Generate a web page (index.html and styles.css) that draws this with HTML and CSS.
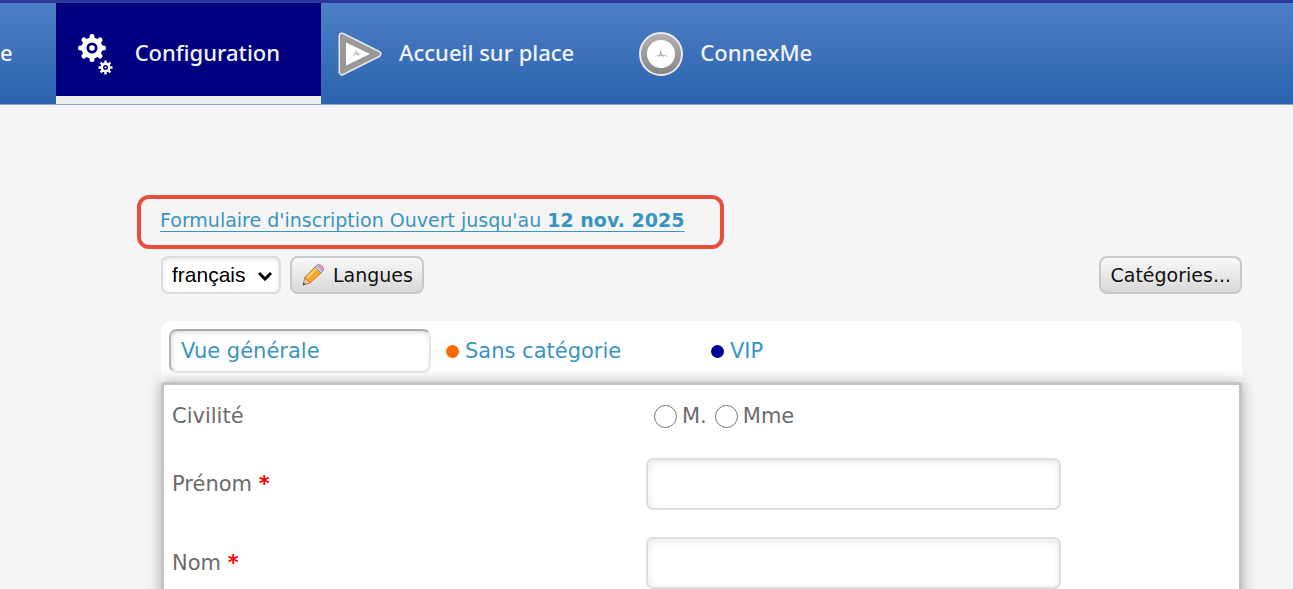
FILE: index.html
```html
<!DOCTYPE html>
<html lang="fr">
<head>
  <meta charset="UTF-8">
  <title>Configuration</title>
  <link rel="stylesheet" href="styles.css">
</head>
<body>
  <nav class="navbar">
    <a href="#" class="nav-item nav-cut">e</a>
    <a href="#" class="nav-item active">
      <svg class="nav-icon" viewBox="0 0 44 44" width="44" height="44">
        <g stroke="#fff" fill="none">
          <circle cx="15" cy="16" r="8" stroke-width="5"/>
          <g stroke-width="5" stroke-linecap="round">
            <path d="M15 4.500V7M15 25v2.500M3.500 16H6M24 16h2.500M6.900 7.900l2 2M21.100 22.100l2 2M6.900 24.100l2-2M21.100 9.900l2-2"/>
          </g>
          <circle cx="28.500" cy="35.500" r="3.700" stroke-width="2.400"/>
          <path stroke-width="2.400" d="M28.500 28.500v3M28.500 39.500v3M21.500 35.500h3M32.500 35.500h3M23.600 30.600l2 2M31.400 38.400l2 2M23.600 40.400l2-2M31.400 32.600l2-2"/>
        </g>
        <circle cx="15" cy="16" r="2.800" fill="#fff"/>
        <circle cx="28.500" cy="35.500" r="1" fill="#fff"/>
      </svg>
      <span>Configuration</span>
    </a>
    <a href="#" class="nav-item">
      <svg class="nav-icon" viewBox="0 0 44 44" width="44" height="44">
        <path d="M4 4L40 22L4 40Z" fill="#999" stroke="#e8e8e8" stroke-width="7" stroke-linejoin="round"/>
        <path d="M4 4L40 22L4 40Z" fill="#999" stroke="#999" stroke-width="4" stroke-linejoin="round"/>
        <path d="M8 10.500L32 22L8 33.500Z" fill="#fff"/>
        <path d="M12 22l5-.5 1-4 1.500 3.500 5 1-4 .2 1.500 2.300-4-2.300-4 2.500 2-2.700Z" fill="#bbb"/>
      </svg>
      <span>Accueil sur place</span>
    </a>
    <a href="#" class="nav-item">
      <svg class="nav-icon" viewBox="0 0 44 44" width="44" height="44">
        <defs>
          <linearGradient id="ring" x1="0" y1="0" x2="0" y2="1">
            <stop offset="0" stop-color="#b4b4b4"/>
            <stop offset="1" stop-color="#858585"/>
          </linearGradient>
        </defs>
        <circle cx="22" cy="22" r="21" fill="url(#ring)" stroke="#ececec" stroke-width="2"/>
        <circle cx="22" cy="22" r="14" fill="#fff"/>
        <path d="M13.500 24.500l7-1.500 1-6 1.500 5.500 7 2-6-.8 1 1.800-3-2-3 2 1-1.800Z" fill="#aaa"/>
      </svg>
      <span>ConnexMe</span>
    </a>
  </nav>

  <main class="content">
    <div class="highlight">
      <a href="#">Formulaire d'inscription Ouvert jusqu'au <b>12 nov. 2025</b></a>
    </div>

    <div class="form-area">
      <div class="toolbar">
        <div class="select-wrap">
          <select class="lang" aria-label="Langue">
            <option>français</option>
          </select>
          <svg class="chevron" viewBox="0 0 16 10" width="16" height="10">
            <path d="M2 2l6 6 6-6" fill="none" stroke="#000" stroke-width="3"/>
          </svg>
        </div>
        <button type="button" class="btn">
          <svg viewBox="0 0 24 24" width="24" height="24">
            <path d="M2 22l2-8 5 6Z" fill="#ecc9a0" stroke="#a57a4a"/>
            <path d="M4 14L14 4l6 6L9 20Z" fill="#f9a62b" stroke="#cf7c18"/>
            <path d="M6 15L16 5" stroke="#ffd480" stroke-width="2"/>
            <path d="M14 4l2-2 6 6-2 2Z" fill="#c5cdd2" stroke="#8f979c"/>
            <path d="M16 2q2-2 5 1t1 5Z" fill="#d9a0d3" stroke="#b889b5"/>
            <path d="M2 22l.5-2.500 2 2Z" fill="#333"/>
          </svg>
          <span>Langues</span>
        </button>
        <button type="button" class="btn btn-right">Catégories...</button>
      </div>

      <div class="tabs">
        <a href="#" class="tab selected">Vue générale</a>
        <a href="#" class="tab"><i class="dot orange"></i>Sans catégorie</a>
        <a href="#" class="tab"><i class="dot blue"></i>VIP</a>
      </div>

      <form class="panel">
        <div class="row row-civility" role="radiogroup" aria-labelledby="civilite">
          <span id="civilite">Civilité</span>
          <div class="radios">
            <input type="radio" name="civilite" id="m"><label for="m">M.</label>
            <input type="radio" name="civilite" id="mme"><label for="mme">Mme</label>
          </div>
        </div>
        <div class="row">
          <label for="prenom">Prénom <b class="req">*</b></label>
          <input type="text" id="prenom" required>
        </div>
        <div class="row">
          <label for="nom">Nom <b class="req">*</b></label>
          <input type="text" id="nom" required>
        </div>
      </form>
    </div>
  </main>
</body>
</html>
```

FILE: styles.css
```css
* {
  box-sizing: border-box;
}

body {
  margin: 0;
  height: 100vh;
  overflow: hidden;
  background: #f5f5f5;
  font-family: "DejaVu Sans", Verdana, sans-serif;
  font-size: 19px;
  color: #6b6b6b;
}

a {
  color: #3a94c1;
}

/* top navigation */
.navbar {
  display: flex;
  height: 105px;
  border-top: 3px solid #2b3a98;
  border-bottom: 1px solid #87a8d8;
  background: linear-gradient(#4c80c6, #2c62ae);
}

.nav-item {
  display: flex;
  align-items: center;
  gap: 17px;
  padding: 0 48px 0 17px;
  color: #f0f4fa;
  font-family: "Noto Sans", Tahoma, sans-serif;
  font-size: 22px;
  font-weight: 500;
  text-decoration: none;
  white-space: nowrap;
}

.nav-item span {
  padding-bottom: 4px;
}

.nav-cut {
  padding: 0 43px 4px 0;
}

.nav-item.active {
  gap: 14px;
  padding: 8px 41px 0 21px;
  background: #000080;
  border-bottom: 8px solid #efefef;
}

/* page content */
.content {
  padding: 90px 51px 0 137px;
}

.highlight {
  display: inline-block;
  padding: 8px 36px 12px 19px;
  border: 4px solid #e74f3d;
  border-radius: 12px;
  line-height: 26px;
}

.highlight a {
  text-underline-offset: 4px;
}

.form-area {
  margin-left: 24px;
}

.toolbar {
  display: flex;
  gap: 9px;
  margin-top: 7px;
}

.select-wrap {
  position: relative;
}

.lang {
  width: 120px;
  height: 38px;
  padding: 0 9px 2px;
  appearance: none;
  border: 2px solid #dcdcdc;
  border-radius: 7px;
  background: #fff;
  box-shadow: inset 0 1px 5px #e4e4e4;
  font-family: "Liberation Sans", Arial, sans-serif;
  font-size: 21px;
  color: #000;
}

.chevron {
  position: absolute;
  right: 8px;
  top: 15px;
  pointer-events: none;
}

.btn {
  display: flex;
  align-items: center;
  gap: 8px;
  height: 38px;
  padding: 0 9px;
  border: 2px solid #c8c8c8;
  border-radius: 8px;
  background: linear-gradient(#f8f8f8, #d8d8d8);
  font-family: inherit;
  font-size: 19px;
  color: #111;
}

.btn-right {
  margin-left: auto;
}

.tabs {
  display: flex;
  gap: 3px;
  height: 61px;
  margin-top: 27px;
  padding: 8px;
  border-radius: 10px 10px 0 0;
  background: #fff;
}

.tab {
  display: flex;
  align-items: center;
  width: 262px;
  height: 44px;
  padding: 0 12px;
  font-size: 21px;
  text-decoration: none;
}

.tab.selected {
  border: 2px solid #e6e6e6;
  border-top-color: #aaa;
  border-left-color: #b4b4b4;
  border-radius: 8px;
  padding: 0 10px;
  box-shadow: inset 1px 2px 4px #ddd;
}

.dot {
  width: 13px;
  height: 13px;
  margin-right: 6px;
  border-radius: 50%;
}

.orange {
  background: #ff6a00;
}

.blue {
  background: #000099;
}

.panel {
  position: relative;
  padding: 5px 8px 30px;
  border: 3px solid #c4c4c4;
  border-radius: 4px;
  background: #fff;
  box-shadow: 0 0 14px #aaa;
  font-size: 21px;
}

.row {
  display: grid;
  grid-template-columns: 474fr 585fr;
  align-items: center;
  margin-bottom: 27px;
}

.row label {
  padding-bottom: 1px;
}

.row-civility {
  height: 52px;
  margin-bottom: 16px;
}

.radios {
  display: flex;
  align-items: center;
}

.radios input {
  width: 23px;
  height: 23px;
  margin: 0 5px 0 8px;
}

.row input[type="text"] {
  width: 415px;
  height: 52px;
  padding: 0 10px;
  border: 2px solid #dedede;
  border-radius: 7px;
  background: #fff;
  box-shadow: inset 0 2px 8px #e8e8e8;
  font-size: 21px;
}

.req {
  color: #f00;
}
```
